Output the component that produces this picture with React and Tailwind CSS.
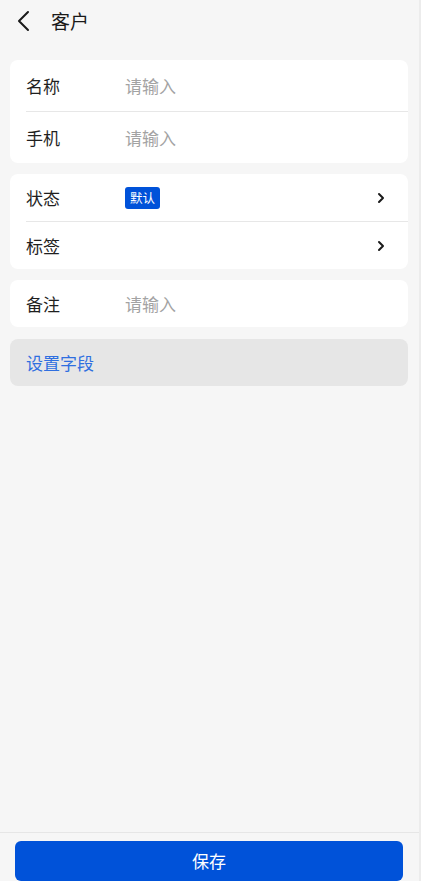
import React from 'react';

const font = { fontFamily: '"Noto Sans CJK SC", "Noto Sans", sans-serif' };

function Chevron() {
  return (
    <svg width="10" height="14" viewBox="0 0 10 14" className="text-[#1a1a1a]">
      <path d="M3 3l4 4-4 4" fill="none" stroke="currentColor" strokeWidth="2" strokeLinecap="round" strokeLinejoin="round" />
    </svg>
  );
}

function InputRow({ label, tall }) {
  return (
    <div className={`flex items-center pl-4 ${tall ? 'h-[51px]' : 'h-[47px]'}`}>
      <span className="w-[99px] text-[17px] text-[#1f1f1f]">{label}</span>
      <span className="text-[17px] text-[#a3a3a3]">请输入</span>
    </div>
  );
}

function Divider() {
  return <div className="ml-4 h-px bg-[#e7e7e7]" />;
}

export default function App() {
  return (
    <div style={font} className="h-screen flex flex-col bg-[#f6f6f6] border-r-2 border-[#ececec]">
      {/* header */}
      <header className="h-[42px] flex items-center pl-[16px]">
        <svg width="16" height="22" viewBox="0 0 16 22" className="text-[#1a1a1a]">
          <path d="M12 2L3 11l9 9" fill="none" stroke="currentColor" strokeWidth="2" strokeLinecap="round" strokeLinejoin="round" />
        </svg>
        <span className="ml-[19px] text-[19px] text-[#1a1a1a]">客户</span>
      </header>

      <main className="flex-1 flex flex-col pl-[10px] pr-[11px] pt-[18px]">
        <div className="bg-white rounded-lg">
          <InputRow label="名称" tall />
          <Divider />
          <InputRow label="手机" tall />
        </div>

        <div className="bg-white rounded-lg mt-[11px]">
          <div className="h-[47px] flex items-center pl-4 pr-[22px]">
            <span className="w-[99px] text-[17px] text-[#1f1f1f]">状态</span>
            <span className="px-[5px] h-[22px] leading-[22px] rounded-[3px] bg-[#0052d9] text-white text-[12.5px]">默认</span>
            <span className="ml-auto"><Chevron /></span>
          </div>
          <Divider />
          <div className="h-[47px] flex items-center pl-4 pr-[22px]">
            <span className="w-[99px] text-[17px] text-[#1f1f1f]">标签</span>
            <span className="ml-auto"><Chevron /></span>
          </div>
        </div>

        <div className="bg-white rounded-lg mt-[11px]">
          <InputRow label="备注" />
        </div>

        <button className="mt-[12px] h-[47px] flex items-center pl-4 rounded-lg bg-[#e6e6e6] text-[17px] text-[#2f6fe0]">
          设置字段
        </button>
      </main>

      <footer className="border-t border-[#e6e6e6] pt-2 pl-[15px] pr-[16px]">
        <button className="w-full h-[40px] rounded-md bg-[#0052d9] text-white text-[17px]">保存</button>
      </footer>
    </div>
  );
}
